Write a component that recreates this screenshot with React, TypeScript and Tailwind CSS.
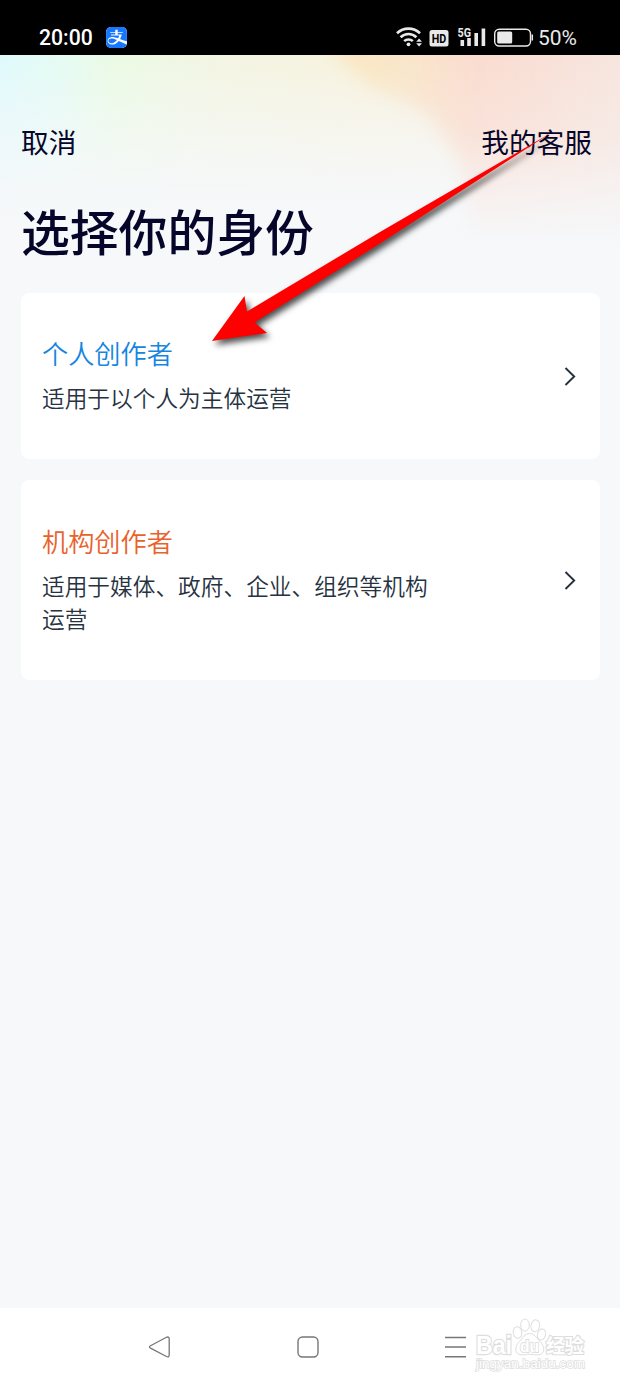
import React from 'react';
import { SiAlipay } from 'react-icons/si';

interface IdentityCardProps {
  title: string;
  titleClass: string;
  description: string;
  cardClass: string;
}

const StatusBar: React.FC = () => (
  <header className="flex h-[55px] items-end justify-between bg-black pr-[42px] pb-[5px] pl-[39px] font-['Roboto',sans-serif] text-white">
    <div className="flex items-center gap-[14px]">
      <span className="w-[53px] text-[21.2px] leading-6 font-medium whitespace-nowrap">20:00</span>
      <span className="mb-0.5 flex size-[21px] overflow-hidden rounded-[5px] bg-white">
        <SiAlipay className="size-[21px] text-[#1677ff]" />
      </span>
    </div>
    <div className="flex items-center text-[#e9e9e9]">
      <svg width="142" height="24" viewBox="396 26 142 24" fill="none" className="font-['Roboto',sans-serif]">
        {/* wifi */}
        <g stroke="currentColor" strokeWidth="2.6">
          <path d="M397 33.3a16.5 16.5 0 0 1 23 0" />
          <path d="M400.6 37.2a11.3 11.3 0 0 1 15.8 0" />
          <path d="M404.2 41.2a6.1 6.1 0 0 1 8.6 0" />
        </g>
        <circle cx="408.5" cy="44.3" r="1.9" fill="currentColor" />
        <path d="M416.2 41.8l2.9-3.3 2.9 3.3zM416.2 43.3l2.9 3.3 2.9-3.3z" fill="currentColor" />
        {/* HD */}
        <rect x="429.5" y="30" width="19" height="16.5" rx="2.5" fill="currentColor" />
        <text x="439" y="43" textAnchor="middle" fontSize="13.5" fontWeight="700" textLength="14.5" lengthAdjust="spacingAndGlyphs" fill="#000">HD</text>
        {/* signal */}
        <text x="457.5" y="36.5" fontSize="12.5" fontWeight="700" textLength="13.5" lengthAdjust="spacingAndGlyphs" fill="currentColor">5G</text>
        <path d="M460.5 40h3.6v6h-3.6zM467.2 38h3.6v8h-3.6zM474.4 33h3.6v13h-3.6zM481.6 28.5h3.6V46h-3.6z" fill="currentColor" />
        {/* battery */}
        <rect x="494.7" y="29.2" width="35.8" height="16.8" rx="4.5" stroke="currentColor" strokeWidth="1.4" />
        <rect x="497.2" y="31.5" width="15" height="12" rx="1.5" fill="currentColor" />
        <path d="M532.3 34.5v6" stroke="currentColor" strokeWidth="1.5" />
      </svg>
      <span className="w-[40px] text-[21px] leading-6 whitespace-nowrap">50%</span>
    </div>
  </header>
);

const Aurora: React.FC = () => (
  <svg className="absolute inset-x-0 top-0" width="620" height="200" viewBox="0 0 620 200">
    <defs>
      <linearGradient id="base">
        <stop offset="0" stopColor="#e0fafc" />
        <stop offset="0.1" stopColor="#e5fbf3" />
        <stop offset="0.19" stopColor="#ebfae4" />
        <stop offset="0.36" stopColor="#f4f5e3" />
        <stop offset="0.58" stopColor="#f7f2df" />
        <stop offset="1" stopColor="#f7efe5" />
      </linearGradient>
      <linearGradient id="warm" gradientUnits="userSpaceOnUse" x1="330" y1="0" x2="620" y2="0">
        <stop offset="0" stopColor="#fae7bd" />
        <stop offset="0.25" stopColor="#f9e6ca" />
        <stop offset="0.5" stopColor="#fadccf" />
        <stop offset="1" stopColor="#f7e5df" />
      </linearGradient>
      <linearGradient id="baseFade" x1="0" y1="0" x2="0" y2="1">
        <stop offset="0.05" stopColor="#f6f8fa" stopOpacity="0" />
        <stop offset="0.5" stopColor="#f6f8fa" stopOpacity="0.5" />
        <stop offset="0.85" stopColor="#f6f8fa" />
      </linearGradient>
      <linearGradient id="fade" x1="0" y1="0" x2="0" y2="1">
        <stop offset="0" stopColor="#f6f8fa" stopOpacity="0" />
        <stop offset="0.4" stopColor="#f6f8fa" stopOpacity="0.25" />
        <stop offset="0.7" stopColor="#f6f8fa" stopOpacity="0.7" />
        <stop offset="0.95" stopColor="#f6f8fa" />
      </linearGradient>
      <filter id="soft" x="-20%" y="-20%" width="140%" height="140%">
        <feGaussianBlur stdDeviation="9" />
      </filter>
    </defs>
    <rect width="620" height="200" fill="url(#base)" />
    <rect width="620" height="200" fill="url(#baseFade)" />
    <path d="M318-30Q350 28 400 44Q445 62 462 120L480 230H670V-30Z" fill="url(#warm)" filter="url(#soft)" />
    <rect width="620" height="200" fill="url(#fade)" />
  </svg>
);

const IdentityCard: React.FC<IdentityCardProps> = ({ title, titleClass, description, cardClass }) => (
  <button className={`flex w-full items-center justify-between rounded-lg bg-white pr-[23px] pl-[21px] text-left ${cardClass}`}>
    <span className="flex w-[400px] flex-col pb-1">
      <span className={`text-[26.2px] leading-[38px] font-[350] ${titleClass}`}>{title}</span>
      <span className="mt-[9px] text-[22.7px] leading-[33px] font-[350] text-[#26323f]">{description}</span>
    </span>
    <svg width="14" height="20" viewBox="0 0 14 20" fill="none" stroke="#26303c" strokeWidth="1.9">
      <path d="M2.5 2 11.2 10.5 2.5 19" />
    </svg>
  </button>
);

const Arrow: React.FC = () => (
  <svg className="pointer-events-none absolute top-[120px] left-[190px]" width="380" height="250" viewBox="190 120 380 250">
    <path
      d="M212 341 244.5 296 247 311.5 380 232 550 133.5 380 243.5 254.5 322.5 267 333Z"
      fill="#fe0000"
      className="drop-shadow-[3px_4px_3px_rgba(0,0,0,0.7)]"
    />
  </svg>
);

const Watermark: React.FC = () => (
  <svg
    className="absolute right-[30px] bottom-[8px] font-['Liberation_Sans','Noto_Sans_CJK_SC',sans-serif]"
    width="116"
    height="62"
    viewBox="474 1316 116 62"
    fill="#fff"
    stroke="#dedede"
    strokeWidth="1"
  >
    <text x="476" y="1353.5" fontSize="25" fontWeight="700" strokeWidth="2.4" paintOrder="stroke" textLength="36" lengthAdjust="spacingAndGlyphs">Bai</text>
    <ellipse cx="517.5" cy="1332.5" rx="4.3" ry="5.8" transform="rotate(-10 517.5 1332.5)" />
    <ellipse cx="525" cy="1325" rx="4.3" ry="6" />
    <ellipse cx="535.3" cy="1325.8" rx="4.3" ry="6" transform="rotate(10 535.3 1325.8)" />
    <ellipse cx="541.5" cy="1334.5" rx="4" ry="5.6" transform="rotate(15 541.5 1334.5)" />
    <path d="M529.5 1333.5c-5 0-6.5 4.500-10 8-5.500 5-5 13 1.500 13.300 4 .3 5.500-.5 8.500-.5s5 .8 9 .5c6.500-.6 7-8.300 1.500-13.300-3.500-3.500-5.500-8-10.500-8Z" />
    <text x="520" y="1351.5" fontSize="17" fontWeight="700" strokeWidth="1.8" paintOrder="stroke" textLength="19" lengthAdjust="spacingAndGlyphs">du</text>
    <text x="546" y="1353" fontSize="19.5" fontWeight="700" strokeWidth="2.2" paintOrder="stroke" textLength="38">经验</text>
    <text x="476" y="1368" fontSize="12.5" strokeWidth="1.5" paintOrder="stroke" textLength="109" lengthAdjust="spacingAndGlyphs">jingyan.baidu.com</text>
  </svg>
);

const NavigationBar: React.FC = () => (
  <nav className="relative h-[78px] bg-white pt-7 pl-[148px]">
    <div className="flex w-[319px] items-center justify-between text-[#777]">
      <svg width="22" height="22" viewBox="0 0 22 22" fill="none" stroke="currentColor" strokeWidth="1.3">
        <path d="M2.5 9.8 18 1.5Q21.2 0 21.2 3V19Q21.2 22 18 20.3L2.5 12.2Q.5 11 2.5 9.8Z" />
      </svg>
      <svg width="22" height="22" viewBox="0 0 22 22" fill="none" stroke="currentColor" strokeWidth="1.4">
        <rect x="1" y="1" width="20" height="20" rx="4.5" />
      </svg>
      <svg width="22" height="22" viewBox="0 0 22 22" fill="none" stroke="currentColor" strokeWidth="1.6">
        <path d="M0 1.500h21M0 11h21M0 20.800h21" />
      </svg>
    </div>
    <Watermark />
  </nav>
);

export default function App() {
  return (
    <div className="relative flex h-[1386px] w-[620px] flex-col overflow-hidden bg-[#f6f8fa] font-['Noto_Sans_CJK_SC',sans-serif]">
      <StatusBar />
      <main className="relative flex-1">
        <Aurora />
        <div className="relative px-[21px] pt-[66px]">
          <div className="flex items-center justify-between pr-[7px] text-[27.7px] leading-10 text-[#06062a]">
            <button>取消</button>
            <button>我的客服</button>
          </div>
          <h1 className="mt-[33px] text-[48.8px] leading-[72px] font-medium text-[#06062a]">选择你的身份</h1>
          <div className="mt-[27px] flex w-[579px] flex-col gap-[21px]">
            <IdentityCard
              title="个人创作者"
              titleClass="text-[#1485e0]"
              description="适用于以个人为主体运营"
              cardClass="h-[166px]"
            />
            <IdentityCard
              title="机构创作者"
              titleClass="text-[#e9622b]"
              description="适用于媒体、政府、企业、组织等机构运营"
              cardClass="h-[200px]"
            />
          </div>
        </div>
      </main>
      <NavigationBar />
      <Arrow />
    </div>
  );
}
